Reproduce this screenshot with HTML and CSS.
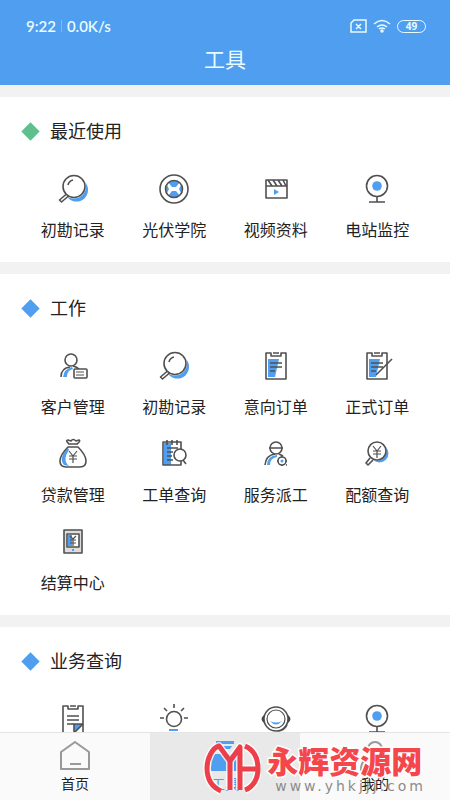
FILE: index.html
```html
<!DOCTYPE html>
<html lang="zh-CN">
<head>
<meta charset="utf-8">
<meta name="viewport" content="width=device-width, initial-scale=1">
<title>工具</title>
<link rel="stylesheet" href="styles.css">
</head>
<body>
<svg class="sprite" aria-hidden="true">
  <symbol id="search" viewBox="0 0 36 36">
    <circle class="b" cx="21.500" cy="19" r="11.500"/>
    <circle class="w" cx="19" cy="15.500" r="12"/>
    <circle class="l" cx="19" cy="15.500" r="11"/>
    <path class="l" d="M13 14q1-4 5-5M11.500 23l-7 6 2 2 7-6"/>
  </symbol>
  <symbol id="academy" viewBox="0 0 36 36">
    <circle class="l" cx="18" cy="18" r="14"/>
    <path class="b" d="M12 11q6-4 12 0l-4 5h-4zM12 25q6 4 12 0l-4-5h-4z"/>
    <path class="b" d="M11 14l2 4-2 4q-2-4 0-8M25 14l-2 4 2 4q2-4 0-8"/>
    <circle class="l" cx="18" cy="18" r="8.500"/>
  </symbol>
  <symbol id="video" viewBox="0 0 36 36">
    <path class="l" d="M8 9h21v18H8zM8 15h21M10 9l4 6M15 9l4 6M20 9l4 6M25 9l3 6"/><path class="b" d="M16 18l5 3-5 3z"/>
  </symbol>
  <symbol id="camera" viewBox="0 0 36 36">
    <circle class="l" cx="18" cy="15" r="10.500"/><circle class="b" cx="18" cy="15" r="4.800"/><path class="l" d="M18 26v5M10 31h16"/>
  </symbol>
  <symbol id="customer" viewBox="0 0 36 36">
    <path class="b" d="M8 29q1-8 9-10l1 2q-6 1-6 8z"/>
    <circle class="l" cx="16" cy="12" r="6"/><path class="l" d="M6 29q0-9 9-10M18 18q4 1 6 3"/>
    <rect class="l w" x="19" y="21" width="13" height="9" rx="1"/><path class="l t" d="M21 24h8M21 27h8"/>
  </symbol>
  <symbol id="order" viewBox="0 0 36 36">
    <path class="b" d="M10 11h11l-4 18h-7z"/><path class="l" d="M8 5h5v3h10V5h5v26H8zM15 5h6M12 15h12M12 19h12M12 23h5"/>
  </symbol>
  <symbol id="signed" viewBox="0 0 36 36">
    <use href="#order"/><path class="l" d="M33 11L17 27"/>
  </symbol>
  <symbol id="loan" viewBox="0 0 36 36">
    <path class="b" d="M13 12Q3 22 9 29l5 1q-7-6 0-16z"/>
    <path class="l" d="M13 11h10q8 8 8 14 0 6-6 6H11q-6 0-6-6 0-6 8-14zM13 8h10M14 8q-4-4-1-4l3 1q2-3 5 0l3-1q2 1-2 4"/>
    <path class="l t" d="M14 15l4 5 4-5M18 20v7M14 20h8M14 23h8"/>
  </symbol>
  <symbol id="query" viewBox="0 0 36 36">
    <path class="b" d="M8 7h7v22H8z"/><path class="l" d="M7 6h18v23H7zM11 4v5M16 4v5M21 4v5M11 12h11M11 16h6M11 20h5M11 24h6"/>
    <circle class="l w" cx="24" cy="19" r="6"/><path class="l" d="M27 24l3 4"/>
  </symbol>
  <symbol id="service" viewBox="0 0 36 36">
    <path class="b" d="M9 29q0-9 10-10v2q-7 1-7 8z"/>
    <circle class="l" cx="18" cy="12" r="6"/><path class="l" d="M11 12h14M7 29q1-10 10-11M21 18l4 2"/>
    <circle class="l w" cx="24" cy="25" r="4"/><circle class="b" cx="24" cy="25" r="1.500"/><path class="l" d="M24 20v1M24 29v1M19 25h1M28 25h1M28 29h1"/>
  </symbol>
  <symbol id="quota" viewBox="0 0 36 36">
    <circle class="b" cx="20.500" cy="17.500" r="9"/><circle class="w" cx="18" cy="15" r="9.500"/>
    <circle class="l" cx="18" cy="15" r="9"/><path class="l" d="M11 22l-4 5 2 2 5-5"/>
    <path class="l t" d="M14 10l4 5 4-5M18 15v7M14 15h8M14 18h8"/>
  </symbol>
  <symbol id="settle" viewBox="0 0 36 36">
    <path class="g" d="M9 6h18v23H9z"/><path class="w" d="M12 10h12v13H12z"/><path class="b" d="M13 11h4v11h-4zM17 25h2v2h-2z"/>
    <path class="l" d="M9 6h18v23H9zM12 10h12v13H12z"/><path class="l t" d="M15 12l3 3 3-3M18 15v7M15 16h6M15 19h6"/>
  </symbol>
  <symbol id="note" viewBox="0 0 36 36">
    <path class="l" d="M8 5h5v3h10V5h5v27H8zM15 5h6M12 15h12M12 19h12M12 23h7"/><path class="b" d="M19 23h9l-9 9z"/><path class="l" d="M19 32v-9h9M28 23l-9 9"/>
  </symbol>
  <symbol id="bulb" viewBox="0 0 36 36">
    <circle class="l" cx="18" cy="18" r="7.500"/><path class="l" d="M18 3v4M8 7l3 3M28 7l-3 3M4 17h4M28 17h4"/><path class="b" d="M13 28h9v2h-9z"/>
  </symbol>
  <symbol id="headset" viewBox="0 0 36 36">
    <circle class="l" cx="18" cy="18" r="12"/><circle class="l t" cx="18" cy="18" r="9"/><path class="d" d="M6 14q-5 4 0 8zM30 14q5 4 0 8z"/><path class="b" d="M12 20q6 3 12 0-6 7-12 0"/><path class="l" d="M29 24q-3 6-9 6"/>
  </symbol>
</svg>

<header class="top">
  <div class="status">
    <span class="clock">9:22</span><i class="bar"></i><span>0.0K/s</span>
    <svg class="sim" viewBox="0 0 17 14" aria-hidden="true"><path d="M4 1h12v12H1V4zM6 5l5 5M11 5l-5 5"/></svg>
    <svg class="wifi" viewBox="0 0 18 14" aria-hidden="true"><path d="M1 5q8-7 16 0M4 8q5-4 10 0M6 10q3-2 6 0"/><circle cx="9" cy="12" r="1"/></svg>
    <span class="battery">49</span>
  </div>
  <h1>工具</h1>
</header>

<main>
  <section class="card recent">
    <h2>最近使用</h2>
    <div class="grid">
      <a href="#"><svg><use href="#search"/></svg>初勘记录</a>
      <a href="#"><svg><use href="#academy"/></svg>光伏学院</a>
      <a href="#"><svg><use href="#video"/></svg>视频资料</a>
      <a href="#"><svg><use href="#camera"/></svg>电站监控</a>
    </div>
  </section>
  <section class="card">
    <h2>工作</h2>
    <div class="grid">
      <a href="#"><svg><use href="#customer"/></svg>客户管理</a>
      <a href="#"><svg><use href="#search"/></svg>初勘记录</a>
      <a href="#"><svg><use href="#order"/></svg>意向订单</a>
      <a href="#"><svg><use href="#signed"/></svg>正式订单</a>
      <a href="#"><svg><use href="#loan"/></svg>贷款管理</a>
      <a href="#"><svg><use href="#query"/></svg>工单查询</a>
      <a href="#"><svg><use href="#service"/></svg>服务派工</a>
      <a href="#"><svg><use href="#quota"/></svg>配额查询</a>
      <a href="#"><svg><use href="#settle"/></svg>结算中心</a>
    </div>
  </section>
  <section class="card">
    <h2>业务查询</h2>
    <div class="grid">
      <a href="#"><svg><use href="#note"/></svg></a>
      <a href="#"><svg><use href="#bulb"/></svg></a>
      <a href="#"><svg><use href="#headset"/></svg></a>
      <a href="#"><svg><use href="#camera"/></svg></a>
    </div>
  </section>
</main>

<nav class="tabs">
  <a href="#"><svg viewBox="0 0 32 32"><path class="o" d="M2 12L16 2l14 10v17H2zM11 24h11"/></svg>首页</a>
  <a href="#" class="active"><svg viewBox="0 0 32 32"><path class="b" d="M7 1h18v3H7zM9 6h14l-2 3H11zM2 18q0-4 4-4h20q4 0 4 4v13H2z"/></svg>工具</a>
  <a href="#"><svg viewBox="0 0 32 32"><circle class="o" cx="16" cy="9" r="7"/><path class="o" d="M2 30q0-13 14-13t14 13z"/></svg>我的</a>
  <div class="mark">
    <svg viewBox="0 0 58 56" aria-hidden="true">
      <path class="halo" d="M18 50C9 46 4 38 4 27 4 18 9 7 16 5l11 15v29M27 20L37 6v43M37 28h17M42 5c9 4 13 13 13 23s-5 18-13 21"/>
      <path class="red" d="M18 50C9 46 4 38 4 27 4 18 9 7 16 5l11 15v29M27 20L37 6v43M37 28h17M42 5c9 4 13 13 13 23s-5 18-13 21"/>
    </svg>
    <div><strong>永辉资源网</strong><span>www.yhkjjj.com</span></div>
  </div>
</nav>
</body>
</html>
```

FILE: styles.css
```css
* { box-sizing: border-box; }
body {
  margin: 0;
  height: 100vh;
  overflow: hidden;
  background: #f2f2f2;
  color: #222;
  font-family: "Noto Sans", "Noto Sans CJK SC", sans-serif;
}
a { color: inherit; text-decoration: none; }
.sprite { position: absolute; width: 0; height: 0; }

.top { height: 85px; padding: 16px 24px 0; background: #509eef; color: #e8fbff; }
.status { display: flex; align-items: center; height: 20px; padding-left: 2px; font: 600 15px/20px Lato, "Noto Sans", sans-serif; }
.bar { width: 1px; height: 12px; margin: 0 5px; background: #78bdf5; }
.status svg { fill: none; stroke: currentColor; stroke-width: 1.500; }
.sim { width: 17px; height: 14px; margin-left: auto; }
.wifi { width: 18px; height: 14px; margin: 0 6px; }
.battery {
  width: 29px; height: 13px; border: 1px solid; border-radius: 7px;
  font: bold 10px/11px "Noto Sans", sans-serif; text-align: center;
}
h1 { margin: 8px 0 0; font-size: 21px; font-weight: 400; line-height: 30px; text-align: center; }

.card { margin-top: 12px; padding: 22px 22px 14px; background: #fff; }
h2 { display: flex; align-items: center; gap: 13px; margin: 0 0 17px 2px; font-size: 18px; font-weight: 400; line-height: 24px; }
h2::before { content: ""; width: 13px; height: 13px; background: #509eef; transform: rotate(45deg); }
.recent h2::before { background: #5fc08e; }
.grid { display: grid; grid-template-columns: repeat(4, 1fr); grid-auto-rows: 88px; }
.grid a { display: flex; flex-direction: column; align-items: center; gap: 11px; padding-top: 11px; font-size: 16px; line-height: 24px; }
.grid svg { width: 36px; height: 36px; }

.b { fill: #509eef; }
.g { fill: #ddd; }
.d { fill: #484848; }
.l { fill: none; stroke: #505050; stroke-width: 1.600; stroke-linejoin: round; }
.t { stroke-width: 1.200; }
.w { fill: #fff; }
.o { fill: none; stroke: #999; stroke-width: 2; stroke-linejoin: round; }

.tabs {
  position: fixed; inset: auto 0 0; display: grid; grid-template-columns: repeat(3, 1fr);
  height: 68px; border-top: 1px solid #e4e4e4; background: #fafafa;
}
.tabs a { display: flex; flex-direction: column; align-items: center; padding-top: 7px; gap: 1px; font-size: 14px; line-height: 22px; }
.tabs a svg { width: 32px; height: 32px; }
.tabs .active { background: #e9e9e9; color: #509eef; }

.mark { position: absolute; right: 24px; bottom: 3px; display: flex; gap: 6px; }
.mark svg { width: 58px; height: 56px; fill: none; stroke-width: 5; stroke-linejoin: round; }
.mark .halo { stroke: #fff; stroke-width: 8; stroke-opacity: .8; }
.mark .red { stroke: #ec2f3b; stroke-opacity: .92; }
.mark div { display: flex; flex-direction: column; padding-top: 4px; }
.mark strong {
  color: #f4464b; font-size: 31px; font-weight: 900; line-height: 32px; white-space: nowrap;
  -webkit-text-stroke: 3px #fff; paint-order: stroke fill;
}
.mark span { padding-left: 8px; color: #8c8c8c; font: 14px/18px "DejaVu Sans", sans-serif; letter-spacing: 3px; white-space: nowrap; }
```
